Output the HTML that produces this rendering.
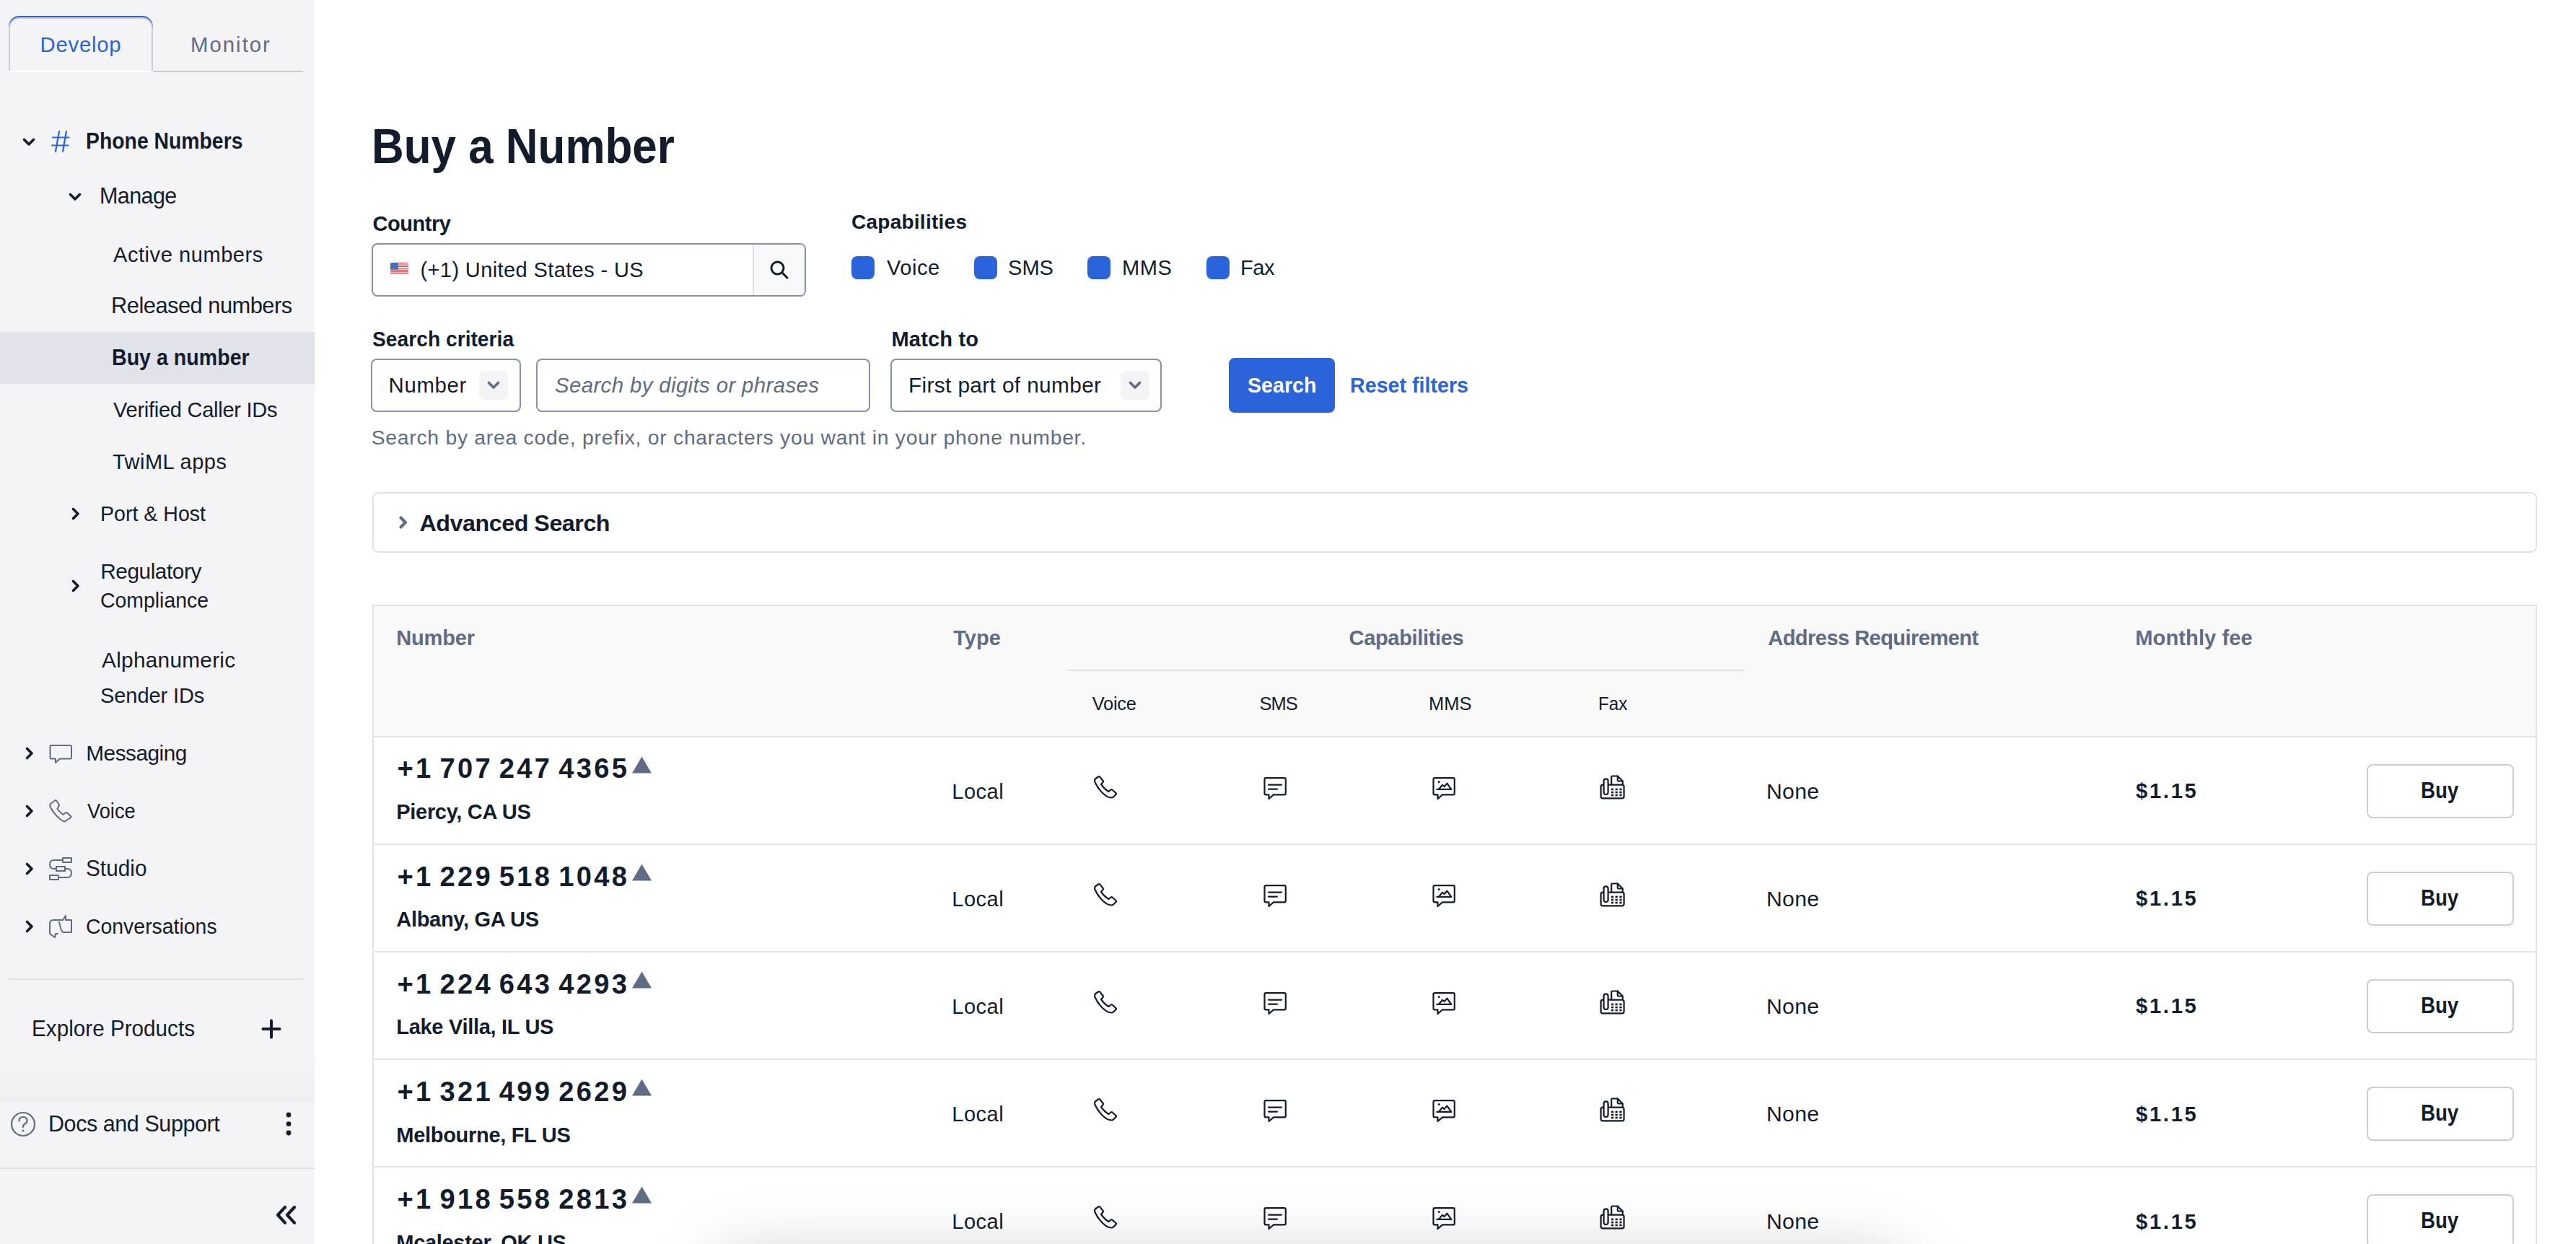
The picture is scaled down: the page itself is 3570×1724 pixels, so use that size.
<!DOCTYPE html>
<html><head><meta charset="utf-8"><style>
html{margin:0;padding:0;width:3570px;height:1724px;overflow:hidden;}
body{margin:0;padding:0;width:3570px;height:1724px;overflow:hidden;position:relative;background:#fff;font-family:"Liberation Sans",sans-serif;color:#121C2D;}
.a{position:absolute;}
.t{position:absolute;white-space:nowrap;}
</style></head><body><div style="position:absolute;left:0;top:0;width:3570px;height:1724px;overflow:hidden;">
<div class="a" style="left:0px;top:0px;width:436px;height:1724px;background:#F4F4F6;"></div><div class="a" style="left:0px;top:460px;width:436px;height:72px;background:#E1E3EA;"></div><div class="a" style="left:212px;top:98px;width:208px;height:2px;background:#CACDD8;"></div><div class="a" style="left:12px;top:24px;width:196px;height:74px;border:2px solid #CACDD8;border-bottom:none;border-radius:15px 15px 0 0;background:#F4F4F6;box-shadow:0 -2px 0 0 #2B63DB;"></div><svg class="a" style="left:29.75px;top:189px;" width="20" height="16" viewBox="0 0 20 16" fill="none"><path d="M3.5 4.5 L10 11 L16.5 4.5" stroke="#121C2D" stroke-width="3.6" stroke-linecap="round" stroke-linejoin="round"/></svg><svg class="a" style="left:94px;top:265.25px;" width="20" height="16" viewBox="0 0 20 16" fill="none"><path d="M3.5 4.5 L10 11 L16.5 4.5" stroke="#121C2D" stroke-width="3.6" stroke-linecap="round" stroke-linejoin="round"/></svg><svg class="a" style="left:97px;top:702px;" width="16" height="20" viewBox="0 0 16 20" fill="none"><path d="M4.5 3.5 L11 10 L4.5 16.5" stroke="#121C2D" stroke-width="3.6" stroke-linecap="round" stroke-linejoin="round"/></svg><svg class="a" style="left:97px;top:802px;" width="16" height="20" viewBox="0 0 16 20" fill="none"><path d="M4.5 3.5 L11 10 L4.5 16.5" stroke="#121C2D" stroke-width="3.6" stroke-linecap="round" stroke-linejoin="round"/></svg><svg class="a" style="left:33px;top:1033.9px;" width="16" height="20" viewBox="0 0 16 20" fill="none"><path d="M4.5 3.5 L11 10 L4.5 16.5" stroke="#121C2D" stroke-width="3.6" stroke-linecap="round" stroke-linejoin="round"/></svg><svg class="a" style="left:33px;top:1114px;" width="16" height="20" viewBox="0 0 16 20" fill="none"><path d="M4.5 3.5 L11 10 L4.5 16.5" stroke="#121C2D" stroke-width="3.6" stroke-linecap="round" stroke-linejoin="round"/></svg><svg class="a" style="left:33px;top:1193.5px;" width="16" height="20" viewBox="0 0 16 20" fill="none"><path d="M4.5 3.5 L11 10 L4.5 16.5" stroke="#121C2D" stroke-width="3.6" stroke-linecap="round" stroke-linejoin="round"/></svg><svg class="a" style="left:33px;top:1273.5px;" width="16" height="20" viewBox="0 0 16 20" fill="none"><path d="M4.5 3.5 L11 10 L4.5 16.5" stroke="#121C2D" stroke-width="3.6" stroke-linecap="round" stroke-linejoin="round"/></svg><div class="a" style="left:12px;top:98px;width:200px;height:2px;background:#FFFFFF;"></div><svg class="a" style="left:70px;top:180px;" width="28" height="32" viewBox="0 0 28 32" fill="none"><path d="M12 2 L7 30 M22 2 L17 30 M3 10.5 H25.5 M2 21.5 H24.5" stroke="#2B63DB" stroke-width="2.2" stroke-linecap="round"/></svg><svg class="a" style="left:68px;top:1031.75px;" width="32" height="26" viewBox="0 0 32 26" fill="none"><path d="M1.5 2.5 Q1.5 1 3 1 H30 Q31 1 31 2.5 V18 Q31 19.5 29.5 19.5 H15 L9 25 V19.5 H3 Q1.5 19.5 1.5 18 Z" stroke="#606B85" stroke-width="2" stroke-linejoin="round" stroke-linecap="round"/></svg><svg class="a" style="left:68px;top:1108px;" width="32" height="32" viewBox="0 0 32 32" fill="none"><path d="M8 1.5 L2 6 Q0.5 8 2 11 Q7 20 14 26 Q20 31 22 30.5 L30 25 Q31 24 30 23 L25 18.5 Q24 17.5 22.5 18.5 L19.5 21 Q15 18 11.5 13 L13.5 9 Q14.5 7.5 13.5 6.5 L10 1.5 Q9 0.7 8 1.5 Z" stroke="#606B85" stroke-width="2" stroke-linejoin="round" stroke-linecap="round"/></svg><svg class="a" style="left:68px;top:1188px;" width="32" height="32" viewBox="0 0 32 32" fill="none"><rect x="19" y="1" width="12" height="6" stroke="#606B85" stroke-width="2" stroke-linejoin="round" stroke-linecap="round"/><rect x="1" y="25" width="12" height="6" stroke="#606B85" stroke-width="2" stroke-linejoin="round" stroke-linecap="round"/><rect x="10" y="13" width="12" height="6" stroke="#606B85" stroke-width="2" stroke-linejoin="round" stroke-linecap="round"/><path d="M19 4 H7 Q1 4 1 10 Q1 16 7 16 H10 M22 16 H25 Q31 16 31 22 Q31 28 25 28 H13" stroke="#606B85" stroke-width="2" stroke-linejoin="round" stroke-linecap="round"/></svg><svg class="a" style="left:68px;top:1268px;" width="32" height="32" viewBox="0 0 32 32" fill="none"><path d="M19 7 H6 Q1 7 1 12 V26 L8 31 L9 26 H12 M19 7 L23 1 V7 H31 V24 H21 Q18 24 17 21 L14 10" stroke="#606B85" stroke-width="2" stroke-linejoin="round" stroke-linecap="round"/></svg><div class="a" style="left:0px;top:1462px;width:436px;height:66px;background:linear-gradient(to bottom, rgba(0,0,0,0), rgba(0,0,0,0.018));"></div><div class="a" style="left:12px;top:1356px;width:408px;height:2px;background:#E1E3EA;"></div><div class="a" style="left:0px;top:1618px;width:436px;height:2px;background:#E1E3EA;"></div><svg class="a" style="left:362px;top:1412px;" width="28" height="28" viewBox="0 0 28 28" fill="none"><path d="M14 2.5 V25.5 M2.5 14 H25.5" stroke="#121C2D" stroke-width="4" stroke-linecap="round"/></svg><svg class="a" style="left:13px;top:1539px;" width="38" height="38" viewBox="0 0 38 38" fill="none"><circle cx="19" cy="19" r="16" stroke="#606B85" stroke-width="2.2"/><path d="M13.5 14.5 Q13.5 9 19 9 Q24.5 9 24.5 14 Q24.5 17 21.5 18.5 Q19 19.8 19 22.5 V23" stroke="#606B85" stroke-width="2.2" stroke-linecap="round" fill="none"/><circle cx="19" cy="28" r="1.5" fill="#606B85"/></svg><svg class="a" style="left:392px;top:1538px;" width="16" height="40" viewBox="0 0 16 40" fill="none"><circle cx="8" cy="7" r="3.4" fill="#121C2D"/><circle cx="8" cy="19.6" r="3.4" fill="#121C2D"/><circle cx="8" cy="32" r="3.4" fill="#121C2D"/></svg><svg class="a" style="left:378px;top:1668px;" width="36" height="32" viewBox="0 0 36 32" fill="none"><path d="M17 5 L7 15.8 L17 26.6 M30 5 L20 15.8 L30 26.6" stroke="#121C2D" stroke-width="4.2" stroke-linecap="round" stroke-linejoin="round"/></svg><div class="a" style="left:515px;top:337px;width:602px;height:74px;box-sizing:border-box;border:2px solid #8891AA;border-radius:8px;background:#fff;overflow:hidden;"></div><div class="a" style="left:1043px;top:339px;width:72px;height:70px;background:#F9F9FA;border-left:2px solid #E1E3EA;border-radius:0 6px 6px 0;box-sizing:border-box;"></div><svg class="a" style="left:1064px;top:358px;" width="32" height="32" viewBox="0 0 32 32" fill="none"><circle cx="13.5" cy="13.5" r="8.5" stroke="#121C2D" stroke-width="3"/><path d="M19.8 19.8 L27 27" stroke="#121C2D" stroke-width="3" stroke-linecap="round"/></svg><svg class="a" style="left:541px;top:364px;border-radius:2px;" width="25" height="17" viewBox="0 0 25 17" fill="none"><rect width="25" height="17" fill="#fff"/><rect y="0.00" width="25" height="1.22" fill="#D64545"/><rect y="2.43" width="25" height="1.22" fill="#D64545"/><rect y="4.86" width="25" height="1.22" fill="#D64545"/><rect y="7.29" width="25" height="1.22" fill="#D64545"/><rect y="9.72" width="25" height="1.22" fill="#D64545"/><rect y="12.15" width="25" height="1.22" fill="#D64545"/><rect y="14.58" width="25" height="1.22" fill="#D64545"/><rect width="11" height="9.7" fill="#4470BA"/></svg><div class="a" style="left:1180px;top:355px;width:32px;height:32px;background:#2B63DB;border-radius:8px;"></div><div class="a" style="left:1350px;top:355px;width:32px;height:32px;background:#2B63DB;border-radius:8px;"></div><div class="a" style="left:1507px;top:355px;width:32px;height:32px;background:#2B63DB;border-radius:8px;"></div><div class="a" style="left:1672px;top:355px;width:32px;height:32px;background:#2B63DB;border-radius:8px;"></div><div class="a" style="left:514px;top:497px;width:208px;height:74px;box-sizing:border-box;border:2px solid #8891AA;border-radius:8px;"></div><div class="a" style="left:664px;top:514px;width:40px;height:40px;background:#F4F4F6;border-radius:8px;"></div><svg class="a" style="left:674px;top:526px;" width="20" height="16" viewBox="0 0 20 16" fill="none"><path d="M3.5 4.5 L10 11 L16.5 4.5" stroke="#606B85" stroke-width="3.6" stroke-linecap="round" stroke-linejoin="round"/></svg><div class="a" style="left:743px;top:497px;width:463px;height:74px;box-sizing:border-box;border:2px solid #8891AA;border-radius:8px;"></div><div class="a" style="left:1234px;top:497px;width:376px;height:74px;box-sizing:border-box;border:2px solid #8891AA;border-radius:8px;"></div><div class="a" style="left:1553px;top:514px;width:40px;height:40px;background:#F4F4F6;border-radius:8px;"></div><svg class="a" style="left:1563px;top:526px;" width="20" height="16" viewBox="0 0 20 16" fill="none"><path d="M3.5 4.5 L10 11 L16.5 4.5" stroke="#606B85" stroke-width="3.6" stroke-linecap="round" stroke-linejoin="round"/></svg><div class="a" style="left:1703px;top:496px;width:147px;height:76px;background:#2B63DB;border-radius:8px;"></div><div class="a" style="left:516px;top:682px;width:3000px;height:84px;box-sizing:border-box;border:2px solid #E1E3EA;border-radius:8px;"></div><svg class="a" style="left:551px;top:714.3px;" width="16" height="20" viewBox="0 0 16 20" fill="none"><path d="M4.5 3.5 L11 10 L4.5 16.5" stroke="#606B85" stroke-width="4.2" stroke-linecap="round" stroke-linejoin="round"/></svg><div class="a" style="left:516px;top:838px;width:3000px;height:962px;box-sizing:border-box;border:2px solid #E1E3EA;background:#fff;"></div><div class="a" style="left:518px;top:840px;width:2996px;height:180px;background:#F9F9FA;"></div><div class="a" style="left:518px;top:1019.5px;width:2996px;height:2.0px;background:#E1E3EA;"></div><div class="a" style="left:1480px;top:928px;width:938px;height:2px;background:#E1E3EA;"></div><div class="a" style="left:518px;top:1169px;width:2996px;height:2px;background:#E1E3EA;"></div><div class="a" style="left:518px;top:1318px;width:2996px;height:2px;background:#E1E3EA;"></div><div class="a" style="left:518px;top:1467px;width:2996px;height:2px;background:#E1E3EA;"></div><div class="a" style="left:518px;top:1616px;width:2996px;height:2px;background:#E1E3EA;"></div><svg class="a" style="left:874px;top:1047.0px;" width="31" height="26" viewBox="0 0 31 26" fill="none"><path d="M15.5 1.5 L29 24.5 H2 Z" fill="#606B85"/></svg><svg class="a" style="left:1516px;top:1075.0px;" width="32" height="32" viewBox="0 0 32 32" fill="none"><path d="M6 1.5 L1.8 4.5 Q0.5 6 1.5 9 Q5 17 12 24 Q19 30.5 24 30.5 Q26 30.5 27 29.5 L30.5 26 Q31.5 25 30.5 24 L25.5 19.5 Q24.5 18.7 23.5 19.5 L20.5 22 Q15 19 10 12 L12.5 9 Q13.3 8 12.5 7 L8.5 1.8 Q7.5 0.8 6 1.5 Z" stroke="#121C2D" stroke-width="2.2" stroke-linejoin="round" stroke-linecap="round"/></svg><svg class="a" style="left:1751px;top:1077.0px;" width="32" height="32" viewBox="0 0 32 32" fill="none"><path d="M1.5 3 Q1.5 1.2 3.3 1.2 H29 Q30.8 1.2 30.8 3 V22.5 Q30.8 24.3 29 24.3 H14 L7.5 30 V24.3 H3.3 Q1.5 24.3 1.5 22.5 Z" stroke="#121C2D" stroke-width="2.2" stroke-linejoin="round" stroke-linecap="round"/><path d="M7 10.6 H25 M7 16.6 H19" stroke="#121C2D" stroke-width="2.2" stroke-linejoin="round" stroke-linecap="round"/></svg><svg class="a" style="left:1985px;top:1077.0px;" width="32" height="32" viewBox="0 0 32 32" fill="none"><path d="M1.5 3 Q1.5 1.2 3.3 1.2 H29 Q30.8 1.2 30.8 3 V22.5 Q30.8 24.3 29 24.3 H14 L7.5 30 V24.3 H3.3 Q1.5 24.3 1.5 22.5 Z" stroke="#121C2D" stroke-width="2.2" stroke-linejoin="round" stroke-linecap="round"/><circle cx="9.2" cy="6.4" r="1.5" fill="#121C2D"/><path d="M6.3 16.9 H26.3 L20.4 8.6 L16.6 13 L14 10.8 L8.8 16.9" stroke="#121C2D" stroke-width="2.2" stroke-linejoin="round" stroke-linecap="round"/></svg><svg class="a" style="left:2217px;top:1074.0px;" width="36" height="34" viewBox="0 0 36 34" fill="none"><path d="M16.2 13.5 V2.6 Q16.2 1.5 17.3 1.5 H24.8 L31.8 8.5 V13.5" stroke="#121C2D" stroke-width="2.2" stroke-linejoin="round" stroke-linecap="round"/><path d="M24.8 1.5 V7.5 Q24.8 8.5 25.8 8.5 H31.8" stroke="#121C2D" stroke-width="2.2" stroke-linejoin="round" stroke-linecap="round"/><rect x="1.6" y="13.7" width="32" height="18.6" rx="2.6" stroke="#121C2D" stroke-width="2.2" stroke-linejoin="round" stroke-linecap="round"/><rect x="5.6" y="5.4" width="6.0" height="21.6" rx="3" fill="#fff" stroke="#121C2D" stroke-width="2.2" stroke-linejoin="round" stroke-linecap="round"/><g fill="#121C2D"><rect x="16" y="18.6" width="3.2" height="2.6"/><rect x="21.6" y="18.6" width="3.2" height="2.6"/><rect x="27.4" y="18.6" width="3.2" height="2.6"/><rect x="16" y="22.7" width="3.2" height="2.6"/><rect x="21.6" y="22.7" width="3.2" height="2.6"/><rect x="27.4" y="22.7" width="3.2" height="2.6"/><rect x="16" y="26.7" width="3.2" height="2.6"/><rect x="21.6" y="26.7" width="3.2" height="2.6"/><rect x="27.4" y="26.7" width="3.2" height="2.6"/></g></svg><div class="a" style="left:3280px;top:1058.5px;width:204px;height:75.0px;box-sizing:border-box;border:2px solid #CACDD8;border-radius:8px;background:#fff;"></div><svg class="a" style="left:874px;top:1196.05px;" width="31" height="26" viewBox="0 0 31 26" fill="none"><path d="M15.5 1.5 L29 24.5 H2 Z" fill="#606B85"/></svg><svg class="a" style="left:1516px;top:1224.05px;" width="32" height="32" viewBox="0 0 32 32" fill="none"><path d="M6 1.5 L1.8 4.5 Q0.5 6 1.5 9 Q5 17 12 24 Q19 30.5 24 30.5 Q26 30.5 27 29.5 L30.5 26 Q31.5 25 30.5 24 L25.5 19.5 Q24.5 18.7 23.5 19.5 L20.5 22 Q15 19 10 12 L12.5 9 Q13.3 8 12.5 7 L8.5 1.8 Q7.5 0.8 6 1.5 Z" stroke="#121C2D" stroke-width="2.2" stroke-linejoin="round" stroke-linecap="round"/></svg><svg class="a" style="left:1751px;top:1226.05px;" width="32" height="32" viewBox="0 0 32 32" fill="none"><path d="M1.5 3 Q1.5 1.2 3.3 1.2 H29 Q30.8 1.2 30.8 3 V22.5 Q30.8 24.3 29 24.3 H14 L7.5 30 V24.3 H3.3 Q1.5 24.3 1.5 22.5 Z" stroke="#121C2D" stroke-width="2.2" stroke-linejoin="round" stroke-linecap="round"/><path d="M7 10.6 H25 M7 16.6 H19" stroke="#121C2D" stroke-width="2.2" stroke-linejoin="round" stroke-linecap="round"/></svg><svg class="a" style="left:1985px;top:1226.05px;" width="32" height="32" viewBox="0 0 32 32" fill="none"><path d="M1.5 3 Q1.5 1.2 3.3 1.2 H29 Q30.8 1.2 30.8 3 V22.5 Q30.8 24.3 29 24.3 H14 L7.5 30 V24.3 H3.3 Q1.5 24.3 1.5 22.5 Z" stroke="#121C2D" stroke-width="2.2" stroke-linejoin="round" stroke-linecap="round"/><circle cx="9.2" cy="6.4" r="1.5" fill="#121C2D"/><path d="M6.3 16.9 H26.3 L20.4 8.6 L16.6 13 L14 10.8 L8.8 16.9" stroke="#121C2D" stroke-width="2.2" stroke-linejoin="round" stroke-linecap="round"/></svg><svg class="a" style="left:2217px;top:1223.05px;" width="36" height="34" viewBox="0 0 36 34" fill="none"><path d="M16.2 13.5 V2.6 Q16.2 1.5 17.3 1.5 H24.8 L31.8 8.5 V13.5" stroke="#121C2D" stroke-width="2.2" stroke-linejoin="round" stroke-linecap="round"/><path d="M24.8 1.5 V7.5 Q24.8 8.5 25.8 8.5 H31.8" stroke="#121C2D" stroke-width="2.2" stroke-linejoin="round" stroke-linecap="round"/><rect x="1.6" y="13.7" width="32" height="18.6" rx="2.6" stroke="#121C2D" stroke-width="2.2" stroke-linejoin="round" stroke-linecap="round"/><rect x="5.6" y="5.4" width="6.0" height="21.6" rx="3" fill="#fff" stroke="#121C2D" stroke-width="2.2" stroke-linejoin="round" stroke-linecap="round"/><g fill="#121C2D"><rect x="16" y="18.6" width="3.2" height="2.6"/><rect x="21.6" y="18.6" width="3.2" height="2.6"/><rect x="27.4" y="18.6" width="3.2" height="2.6"/><rect x="16" y="22.7" width="3.2" height="2.6"/><rect x="21.6" y="22.7" width="3.2" height="2.6"/><rect x="27.4" y="22.7" width="3.2" height="2.6"/><rect x="16" y="26.7" width="3.2" height="2.6"/><rect x="21.6" y="26.7" width="3.2" height="2.6"/><rect x="27.4" y="26.7" width="3.2" height="2.6"/></g></svg><div class="a" style="left:3280px;top:1207.55px;width:204px;height:75.0px;box-sizing:border-box;border:2px solid #CACDD8;border-radius:8px;background:#fff;"></div><svg class="a" style="left:874px;top:1345.1px;" width="31" height="26" viewBox="0 0 31 26" fill="none"><path d="M15.5 1.5 L29 24.5 H2 Z" fill="#606B85"/></svg><svg class="a" style="left:1516px;top:1373.1px;" width="32" height="32" viewBox="0 0 32 32" fill="none"><path d="M6 1.5 L1.8 4.5 Q0.5 6 1.5 9 Q5 17 12 24 Q19 30.5 24 30.5 Q26 30.5 27 29.5 L30.5 26 Q31.5 25 30.5 24 L25.5 19.5 Q24.5 18.7 23.5 19.5 L20.5 22 Q15 19 10 12 L12.5 9 Q13.3 8 12.5 7 L8.5 1.8 Q7.5 0.8 6 1.5 Z" stroke="#121C2D" stroke-width="2.2" stroke-linejoin="round" stroke-linecap="round"/></svg><svg class="a" style="left:1751px;top:1375.1px;" width="32" height="32" viewBox="0 0 32 32" fill="none"><path d="M1.5 3 Q1.5 1.2 3.3 1.2 H29 Q30.8 1.2 30.8 3 V22.5 Q30.8 24.3 29 24.3 H14 L7.5 30 V24.3 H3.3 Q1.5 24.3 1.5 22.5 Z" stroke="#121C2D" stroke-width="2.2" stroke-linejoin="round" stroke-linecap="round"/><path d="M7 10.6 H25 M7 16.6 H19" stroke="#121C2D" stroke-width="2.2" stroke-linejoin="round" stroke-linecap="round"/></svg><svg class="a" style="left:1985px;top:1375.1px;" width="32" height="32" viewBox="0 0 32 32" fill="none"><path d="M1.5 3 Q1.5 1.2 3.3 1.2 H29 Q30.8 1.2 30.8 3 V22.5 Q30.8 24.3 29 24.3 H14 L7.5 30 V24.3 H3.3 Q1.5 24.3 1.5 22.5 Z" stroke="#121C2D" stroke-width="2.2" stroke-linejoin="round" stroke-linecap="round"/><circle cx="9.2" cy="6.4" r="1.5" fill="#121C2D"/><path d="M6.3 16.9 H26.3 L20.4 8.6 L16.6 13 L14 10.8 L8.8 16.9" stroke="#121C2D" stroke-width="2.2" stroke-linejoin="round" stroke-linecap="round"/></svg><svg class="a" style="left:2217px;top:1372.1px;" width="36" height="34" viewBox="0 0 36 34" fill="none"><path d="M16.2 13.5 V2.6 Q16.2 1.5 17.3 1.5 H24.8 L31.8 8.5 V13.5" stroke="#121C2D" stroke-width="2.2" stroke-linejoin="round" stroke-linecap="round"/><path d="M24.8 1.5 V7.5 Q24.8 8.5 25.8 8.5 H31.8" stroke="#121C2D" stroke-width="2.2" stroke-linejoin="round" stroke-linecap="round"/><rect x="1.6" y="13.7" width="32" height="18.6" rx="2.6" stroke="#121C2D" stroke-width="2.2" stroke-linejoin="round" stroke-linecap="round"/><rect x="5.6" y="5.4" width="6.0" height="21.6" rx="3" fill="#fff" stroke="#121C2D" stroke-width="2.2" stroke-linejoin="round" stroke-linecap="round"/><g fill="#121C2D"><rect x="16" y="18.6" width="3.2" height="2.6"/><rect x="21.6" y="18.6" width="3.2" height="2.6"/><rect x="27.4" y="18.6" width="3.2" height="2.6"/><rect x="16" y="22.7" width="3.2" height="2.6"/><rect x="21.6" y="22.7" width="3.2" height="2.6"/><rect x="27.4" y="22.7" width="3.2" height="2.6"/><rect x="16" y="26.7" width="3.2" height="2.6"/><rect x="21.6" y="26.7" width="3.2" height="2.6"/><rect x="27.4" y="26.7" width="3.2" height="2.6"/></g></svg><div class="a" style="left:3280px;top:1356.6px;width:204px;height:75.0px;box-sizing:border-box;border:2px solid #CACDD8;border-radius:8px;background:#fff;"></div><svg class="a" style="left:874px;top:1494.15px;" width="31" height="26" viewBox="0 0 31 26" fill="none"><path d="M15.5 1.5 L29 24.5 H2 Z" fill="#606B85"/></svg><svg class="a" style="left:1516px;top:1522.15px;" width="32" height="32" viewBox="0 0 32 32" fill="none"><path d="M6 1.5 L1.8 4.5 Q0.5 6 1.5 9 Q5 17 12 24 Q19 30.5 24 30.5 Q26 30.5 27 29.5 L30.5 26 Q31.5 25 30.5 24 L25.5 19.5 Q24.5 18.7 23.5 19.5 L20.5 22 Q15 19 10 12 L12.5 9 Q13.3 8 12.5 7 L8.5 1.8 Q7.5 0.8 6 1.5 Z" stroke="#121C2D" stroke-width="2.2" stroke-linejoin="round" stroke-linecap="round"/></svg><svg class="a" style="left:1751px;top:1524.15px;" width="32" height="32" viewBox="0 0 32 32" fill="none"><path d="M1.5 3 Q1.5 1.2 3.3 1.2 H29 Q30.8 1.2 30.8 3 V22.5 Q30.8 24.3 29 24.3 H14 L7.5 30 V24.3 H3.3 Q1.5 24.3 1.5 22.5 Z" stroke="#121C2D" stroke-width="2.2" stroke-linejoin="round" stroke-linecap="round"/><path d="M7 10.6 H25 M7 16.6 H19" stroke="#121C2D" stroke-width="2.2" stroke-linejoin="round" stroke-linecap="round"/></svg><svg class="a" style="left:1985px;top:1524.15px;" width="32" height="32" viewBox="0 0 32 32" fill="none"><path d="M1.5 3 Q1.5 1.2 3.3 1.2 H29 Q30.8 1.2 30.8 3 V22.5 Q30.8 24.3 29 24.3 H14 L7.5 30 V24.3 H3.3 Q1.5 24.3 1.5 22.5 Z" stroke="#121C2D" stroke-width="2.2" stroke-linejoin="round" stroke-linecap="round"/><circle cx="9.2" cy="6.4" r="1.5" fill="#121C2D"/><path d="M6.3 16.9 H26.3 L20.4 8.6 L16.6 13 L14 10.8 L8.8 16.9" stroke="#121C2D" stroke-width="2.2" stroke-linejoin="round" stroke-linecap="round"/></svg><svg class="a" style="left:2217px;top:1521.15px;" width="36" height="34" viewBox="0 0 36 34" fill="none"><path d="M16.2 13.5 V2.6 Q16.2 1.5 17.3 1.5 H24.8 L31.8 8.5 V13.5" stroke="#121C2D" stroke-width="2.2" stroke-linejoin="round" stroke-linecap="round"/><path d="M24.8 1.5 V7.5 Q24.8 8.5 25.8 8.5 H31.8" stroke="#121C2D" stroke-width="2.2" stroke-linejoin="round" stroke-linecap="round"/><rect x="1.6" y="13.7" width="32" height="18.6" rx="2.6" stroke="#121C2D" stroke-width="2.2" stroke-linejoin="round" stroke-linecap="round"/><rect x="5.6" y="5.4" width="6.0" height="21.6" rx="3" fill="#fff" stroke="#121C2D" stroke-width="2.2" stroke-linejoin="round" stroke-linecap="round"/><g fill="#121C2D"><rect x="16" y="18.6" width="3.2" height="2.6"/><rect x="21.6" y="18.6" width="3.2" height="2.6"/><rect x="27.4" y="18.6" width="3.2" height="2.6"/><rect x="16" y="22.7" width="3.2" height="2.6"/><rect x="21.6" y="22.7" width="3.2" height="2.6"/><rect x="27.4" y="22.7" width="3.2" height="2.6"/><rect x="16" y="26.7" width="3.2" height="2.6"/><rect x="21.6" y="26.7" width="3.2" height="2.6"/><rect x="27.4" y="26.7" width="3.2" height="2.6"/></g></svg><div class="a" style="left:3280px;top:1505.65px;width:204px;height:75.0px;box-sizing:border-box;border:2px solid #CACDD8;border-radius:8px;background:#fff;"></div><svg class="a" style="left:874px;top:1643.2px;" width="31" height="26" viewBox="0 0 31 26" fill="none"><path d="M15.5 1.5 L29 24.5 H2 Z" fill="#606B85"/></svg><svg class="a" style="left:1516px;top:1671.2px;" width="32" height="32" viewBox="0 0 32 32" fill="none"><path d="M6 1.5 L1.8 4.5 Q0.5 6 1.5 9 Q5 17 12 24 Q19 30.5 24 30.5 Q26 30.5 27 29.5 L30.5 26 Q31.5 25 30.5 24 L25.5 19.5 Q24.5 18.7 23.5 19.5 L20.5 22 Q15 19 10 12 L12.5 9 Q13.3 8 12.5 7 L8.5 1.8 Q7.5 0.8 6 1.5 Z" stroke="#121C2D" stroke-width="2.2" stroke-linejoin="round" stroke-linecap="round"/></svg><svg class="a" style="left:1751px;top:1673.2px;" width="32" height="32" viewBox="0 0 32 32" fill="none"><path d="M1.5 3 Q1.5 1.2 3.3 1.2 H29 Q30.8 1.2 30.8 3 V22.5 Q30.8 24.3 29 24.3 H14 L7.5 30 V24.3 H3.3 Q1.5 24.3 1.5 22.5 Z" stroke="#121C2D" stroke-width="2.2" stroke-linejoin="round" stroke-linecap="round"/><path d="M7 10.6 H25 M7 16.6 H19" stroke="#121C2D" stroke-width="2.2" stroke-linejoin="round" stroke-linecap="round"/></svg><svg class="a" style="left:1985px;top:1673.2px;" width="32" height="32" viewBox="0 0 32 32" fill="none"><path d="M1.5 3 Q1.5 1.2 3.3 1.2 H29 Q30.8 1.2 30.8 3 V22.5 Q30.8 24.3 29 24.3 H14 L7.5 30 V24.3 H3.3 Q1.5 24.3 1.5 22.5 Z" stroke="#121C2D" stroke-width="2.2" stroke-linejoin="round" stroke-linecap="round"/><circle cx="9.2" cy="6.4" r="1.5" fill="#121C2D"/><path d="M6.3 16.9 H26.3 L20.4 8.6 L16.6 13 L14 10.8 L8.8 16.9" stroke="#121C2D" stroke-width="2.2" stroke-linejoin="round" stroke-linecap="round"/></svg><svg class="a" style="left:2217px;top:1670.2px;" width="36" height="34" viewBox="0 0 36 34" fill="none"><path d="M16.2 13.5 V2.6 Q16.2 1.5 17.3 1.5 H24.8 L31.8 8.5 V13.5" stroke="#121C2D" stroke-width="2.2" stroke-linejoin="round" stroke-linecap="round"/><path d="M24.8 1.5 V7.5 Q24.8 8.5 25.8 8.5 H31.8" stroke="#121C2D" stroke-width="2.2" stroke-linejoin="round" stroke-linecap="round"/><rect x="1.6" y="13.7" width="32" height="18.6" rx="2.6" stroke="#121C2D" stroke-width="2.2" stroke-linejoin="round" stroke-linecap="round"/><rect x="5.6" y="5.4" width="6.0" height="21.6" rx="3" fill="#fff" stroke="#121C2D" stroke-width="2.2" stroke-linejoin="round" stroke-linecap="round"/><g fill="#121C2D"><rect x="16" y="18.6" width="3.2" height="2.6"/><rect x="21.6" y="18.6" width="3.2" height="2.6"/><rect x="27.4" y="18.6" width="3.2" height="2.6"/><rect x="16" y="22.7" width="3.2" height="2.6"/><rect x="21.6" y="22.7" width="3.2" height="2.6"/><rect x="27.4" y="22.7" width="3.2" height="2.6"/><rect x="16" y="26.7" width="3.2" height="2.6"/><rect x="21.6" y="26.7" width="3.2" height="2.6"/><rect x="27.4" y="26.7" width="3.2" height="2.6"/></g></svg><div class="a" style="left:3280px;top:1654.7px;width:204px;height:75.0px;box-sizing:border-box;border:2px solid #CACDD8;border-radius:8px;background:#fff;"></div><div class="a" style="left:985px;top:1744px;width:1660px;height:300px;border-radius:40px;box-shadow:0 0 95px rgba(0,0,0,0.21);background:#fff;"></div>
<div class="t" id="develop" style="left:55.50px;top:47.14px;font-size:29.36px;line-height:29.36px;color:#2B63DB;letter-spacing:0.73px;">Develop</div><div class="t" id="monitor" style="left:264.00px;top:47.14px;font-size:29.36px;line-height:29.36px;color:#606B85;letter-spacing:2.00px;">Monitor</div><div class="t" id="pn" style="left:119.00px;top:181.10px;font-size:30.89px;line-height:30.89px;font-weight:700;transform:scaleX(0.9185);transform-origin:0 0;">Phone Numbers</div><div class="t" id="manage" style="left:138.00px;top:256.16px;font-size:30.52px;line-height:30.52px;letter-spacing:-0.60px;">Manage</div><div class="t" id="active" style="left:157.00px;top:338.89px;font-size:29.07px;line-height:29.07px;letter-spacing:0.54px;">Active numbers</div><div class="t" id="released" style="left:154.00px;top:408.60px;font-size:30.89px;line-height:30.89px;letter-spacing:-0.53px;">Released numbers</div><div class="t" id="buynum" style="left:155.00px;top:481.10px;font-size:30.89px;line-height:30.89px;font-weight:700;transform:scaleX(0.9263);transform-origin:0 0;">Buy a number</div><div class="t" id="verified" style="left:157.00px;top:553.89px;font-size:29.07px;line-height:29.07px;letter-spacing:-0.28px;">Verified Caller IDs</div><div class="t" id="twiml" style="left:156.00px;top:626.39px;font-size:29.07px;line-height:29.07px;letter-spacing:0.44px;">TwiML apps</div><div class="t" id="port" style="left:139.25px;top:697.21px;font-size:30.16px;line-height:30.16px;transform:scaleX(0.9472);transform-origin:0 0;">Port &amp; Host</div><div class="t" id="reg1" style="left:139.25px;top:776.52px;font-size:29.80px;line-height:29.80px;letter-spacing:-0.45px;">Regulatory</div><div class="t" id="reg2" style="left:139.25px;top:817.46px;font-size:30.16px;line-height:30.16px;transform:scaleX(0.9424);transform-origin:0 0;">Compliance</div><div class="t" id="alpha1" style="left:141.00px;top:900.27px;font-size:29.80px;line-height:29.80px;letter-spacing:0.27px;">Alphanumeric</div><div class="t" id="alpha2" style="left:139.00px;top:950.14px;font-size:29.07px;line-height:29.07px;letter-spacing:-0.11px;">Sender IDs</div><div class="t" id="messaging" style="left:119.25px;top:1029.02px;font-size:29.80px;line-height:29.80px;letter-spacing:-0.50px;">Messaging</div><div class="t" id="voice" style="left:121.25px;top:1109.02px;font-size:29.80px;line-height:29.80px;transform:scaleX(0.9159);transform-origin:0 0;">Voice</div><div class="t" id="studio" style="left:119.25px;top:1188.60px;font-size:30.89px;line-height:30.89px;transform:scaleX(0.9645);transform-origin:0 0;">Studio</div><div class="t" id="conv" style="left:119.25px;top:1269.21px;font-size:30.16px;line-height:30.16px;transform:scaleX(0.9422);transform-origin:0 0;">Conversations</div><div class="t" id="explore" style="left:43.50px;top:1410.42px;font-size:31.40px;line-height:31.40px;transform:scaleX(0.9457);transform-origin:0 0;">Explore Products</div><div class="t" id="docs" style="left:67.00px;top:1542.16px;font-size:30.52px;line-height:30.52px;letter-spacing:-0.44px;">Docs and Support</div><div class="t" id="title" style="left:514.75px;top:167.99px;font-size:69.40px;line-height:69.40px;font-weight:700;transform:scaleX(0.8925);transform-origin:0 0;">Buy a Number</div><div class="t" id="country" style="left:516.50px;top:296.39px;font-size:29.07px;line-height:29.07px;font-weight:700;letter-spacing:-0.50px;">Country</div><div class="t" id="us" style="left:582.50px;top:360.39px;font-size:29.07px;line-height:29.07px;letter-spacing:0.36px;">(+1) United States - US</div><div class="t" id="capl" style="left:1180.00px;top:294.06px;font-size:27.98px;line-height:27.98px;font-weight:700;letter-spacing:0.27px;">Capabilities</div><div class="t" id="cb1" style="left:1229.00px;top:356.89px;font-size:29.07px;line-height:29.07px;letter-spacing:0.50px;">Voice</div><div class="t" id="cb2" style="left:1397.00px;top:356.89px;font-size:29.07px;line-height:29.07px;">SMS</div><div class="t" id="cb3" style="left:1555.00px;top:356.89px;font-size:29.07px;line-height:29.07px;letter-spacing:0.50px;">MMS</div><div class="t" id="cb4" style="left:1719.00px;top:356.89px;font-size:29.07px;line-height:29.07px;letter-spacing:-0.50px;">Fax</div><div class="t" id="crit" style="left:515.75px;top:455.40px;font-size:30.23px;line-height:30.23px;font-weight:700;transform:scaleX(0.9338);transform-origin:0 0;">Search criteria</div><div class="t" id="match" style="left:1235.50px;top:456.39px;font-size:29.07px;line-height:29.07px;font-weight:700;letter-spacing:0.14px;">Match to</div><div class="t" id="numsel" style="left:538.50px;top:519.14px;font-size:29.36px;line-height:29.36px;letter-spacing:0.68px;">Number</div><div class="t" id="ph" style="left:769.00px;top:519.14px;font-size:29.36px;line-height:29.36px;color:#606B85;font-style:italic;letter-spacing:0.39px;">Search by digits or phrases</div><div class="t" id="first" style="left:1259.00px;top:519.02px;font-size:29.80px;line-height:29.80px;letter-spacing:0.37px;">First part of number</div><div class="t" id="searchbtn" style="left:1729.00px;top:518.90px;font-size:30.23px;line-height:30.23px;font-weight:700;color:#FFFFFF;transform:scaleX(0.9468);transform-origin:0 0;">Search</div><div class="t" id="reset" style="left:1871.00px;top:518.90px;font-size:30.23px;line-height:30.23px;font-weight:700;color:#2B63DB;transform:scaleX(0.9482);transform-origin:0 0;">Reset filters</div><div class="t" id="helper" style="left:514.75px;top:591.50px;font-size:28.34px;line-height:28.34px;color:#606B85;letter-spacing:0.72px;">Search by area code, prefix, or characters you want in your phone number.</div><div class="t" id="adv" style="left:581.50px;top:708.68px;font-size:32.27px;line-height:32.27px;font-weight:700;letter-spacing:-0.48px;">Advanced Search</div><div class="t" id="h_num" style="left:549.25px;top:870.14px;font-size:29.07px;line-height:29.07px;font-weight:700;color:#606B85;letter-spacing:-0.20px;">Number</div><div class="t" id="h_type" style="left:1321.25px;top:870.14px;font-size:29.07px;line-height:29.07px;font-weight:700;color:#606B85;">Type</div><div class="t" id="h_cap" style="left:1869.50px;top:870.14px;font-size:29.07px;line-height:29.07px;font-weight:700;color:#606B85;letter-spacing:-0.36px;">Capabilities</div><div class="t" id="h_addr" style="left:2450.25px;top:870.14px;font-size:29.07px;line-height:29.07px;font-weight:700;color:#606B85;letter-spacing:-0.56px;">Address Requirement</div><div class="t" id="h_fee" style="left:2959.25px;top:870.14px;font-size:29.07px;line-height:29.07px;font-weight:700;color:#606B85;letter-spacing:0.10px;">Monthly fee</div><div class="t" id="s_voice" style="left:1513.75px;top:963.21px;font-size:25.44px;line-height:25.44px;letter-spacing:-0.25px;">Voice</div><div class="t" id="s_sms" style="left:1745.50px;top:963.21px;font-size:25.44px;line-height:25.44px;letter-spacing:-1.00px;">SMS</div><div class="t" id="s_mms" style="left:1980.00px;top:963.21px;font-size:25.44px;line-height:25.44px;">MMS</div><div class="t" id="s_fax" style="left:2215.00px;top:963.21px;font-size:25.44px;line-height:25.44px;transform:scaleX(0.9500);transform-origin:0 0;">Fax</div><div class="t" id="phone0" style="left:550.50px;top:1046.45px;font-size:38.15px;line-height:38.15px;font-weight:700;letter-spacing:3.29px;word-spacing:-5.00px;">+1 707 247 4365</div><div class="t" id="loc0" style="left:549.25px;top:1111.39px;font-size:29.07px;line-height:29.07px;font-weight:700;letter-spacing:-0.33px;">Piercy, CA US</div><div class="t" id="local0" style="left:1319.25px;top:1082.64px;font-size:29.07px;line-height:29.07px;letter-spacing:0.50px;">Local</div><div class="t" id="none0" style="left:2448.00px;top:1081.71px;font-size:30.16px;line-height:30.16px;letter-spacing:0.33px;">None</div><div class="t" id="fee0" style="left:2960.00px;top:1082.39px;font-size:29.07px;line-height:29.07px;font-weight:700;letter-spacing:2.75px;">$1.15</div><div class="t" id="buy0" style="left:3355.00px;top:1081.10px;font-size:30.89px;line-height:30.89px;font-weight:700;transform:scaleX(0.8940);transform-origin:0 0;">Buy</div><div class="t" id="phone1" style="left:550.50px;top:1195.50px;font-size:38.15px;line-height:38.15px;font-weight:700;letter-spacing:3.29px;word-spacing:-5.00px;">+1 229 518 1048</div><div class="t" id="loc1" style="left:549.25px;top:1260.44px;font-size:29.07px;line-height:29.07px;font-weight:700;letter-spacing:-0.33px;">Albany, GA US</div><div class="t" id="local1" style="left:1319.25px;top:1231.69px;font-size:29.07px;line-height:29.07px;letter-spacing:0.50px;">Local</div><div class="t" id="none1" style="left:2448.00px;top:1230.76px;font-size:30.16px;line-height:30.16px;letter-spacing:0.33px;">None</div><div class="t" id="fee1" style="left:2960.00px;top:1231.44px;font-size:29.07px;line-height:29.07px;font-weight:700;letter-spacing:2.75px;">$1.15</div><div class="t" id="buy1" style="left:3355.00px;top:1230.15px;font-size:30.89px;line-height:30.89px;font-weight:700;transform:scaleX(0.8940);transform-origin:0 0;">Buy</div><div class="t" id="phone2" style="left:550.50px;top:1344.55px;font-size:38.15px;line-height:38.15px;font-weight:700;letter-spacing:3.29px;word-spacing:-5.00px;">+1 224 643 4293</div><div class="t" id="loc2" style="left:549.25px;top:1409.49px;font-size:29.07px;line-height:29.07px;font-weight:700;letter-spacing:-0.33px;">Lake Villa, IL US</div><div class="t" id="local2" style="left:1319.25px;top:1380.74px;font-size:29.07px;line-height:29.07px;letter-spacing:0.50px;">Local</div><div class="t" id="none2" style="left:2448.00px;top:1379.81px;font-size:30.16px;line-height:30.16px;letter-spacing:0.33px;">None</div><div class="t" id="fee2" style="left:2960.00px;top:1380.49px;font-size:29.07px;line-height:29.07px;font-weight:700;letter-spacing:2.75px;">$1.15</div><div class="t" id="buy2" style="left:3355.00px;top:1379.20px;font-size:30.89px;line-height:30.89px;font-weight:700;transform:scaleX(0.8940);transform-origin:0 0;">Buy</div><div class="t" id="phone3" style="left:550.50px;top:1493.60px;font-size:38.15px;line-height:38.15px;font-weight:700;letter-spacing:3.29px;word-spacing:-5.00px;">+1 321 499 2629</div><div class="t" id="loc3" style="left:549.25px;top:1558.54px;font-size:29.07px;line-height:29.07px;font-weight:700;letter-spacing:-0.33px;">Melbourne, FL US</div><div class="t" id="local3" style="left:1319.25px;top:1529.79px;font-size:29.07px;line-height:29.07px;letter-spacing:0.50px;">Local</div><div class="t" id="none3" style="left:2448.00px;top:1528.86px;font-size:30.16px;line-height:30.16px;letter-spacing:0.33px;">None</div><div class="t" id="fee3" style="left:2960.00px;top:1529.54px;font-size:29.07px;line-height:29.07px;font-weight:700;letter-spacing:2.75px;">$1.15</div><div class="t" id="buy3" style="left:3355.00px;top:1528.25px;font-size:30.89px;line-height:30.89px;font-weight:700;transform:scaleX(0.8940);transform-origin:0 0;">Buy</div><div class="t" id="phone4" style="left:550.50px;top:1642.65px;font-size:38.15px;line-height:38.15px;font-weight:700;letter-spacing:3.29px;word-spacing:-5.00px;">+1 918 558 2813</div><div class="t" id="loc4" style="left:549.25px;top:1707.59px;font-size:29.07px;line-height:29.07px;font-weight:700;letter-spacing:-0.33px;">Mcalester, OK US</div><div class="t" id="local4" style="left:1319.25px;top:1678.84px;font-size:29.07px;line-height:29.07px;letter-spacing:0.50px;">Local</div><div class="t" id="none4" style="left:2448.00px;top:1677.91px;font-size:30.16px;line-height:30.16px;letter-spacing:0.33px;">None</div><div class="t" id="fee4" style="left:2960.00px;top:1678.59px;font-size:29.07px;line-height:29.07px;font-weight:700;letter-spacing:2.75px;">$1.15</div><div class="t" id="buy4" style="left:3355.00px;top:1677.30px;font-size:30.89px;line-height:30.89px;font-weight:700;transform:scaleX(0.8940);transform-origin:0 0;">Buy</div>
</div></body></html>
